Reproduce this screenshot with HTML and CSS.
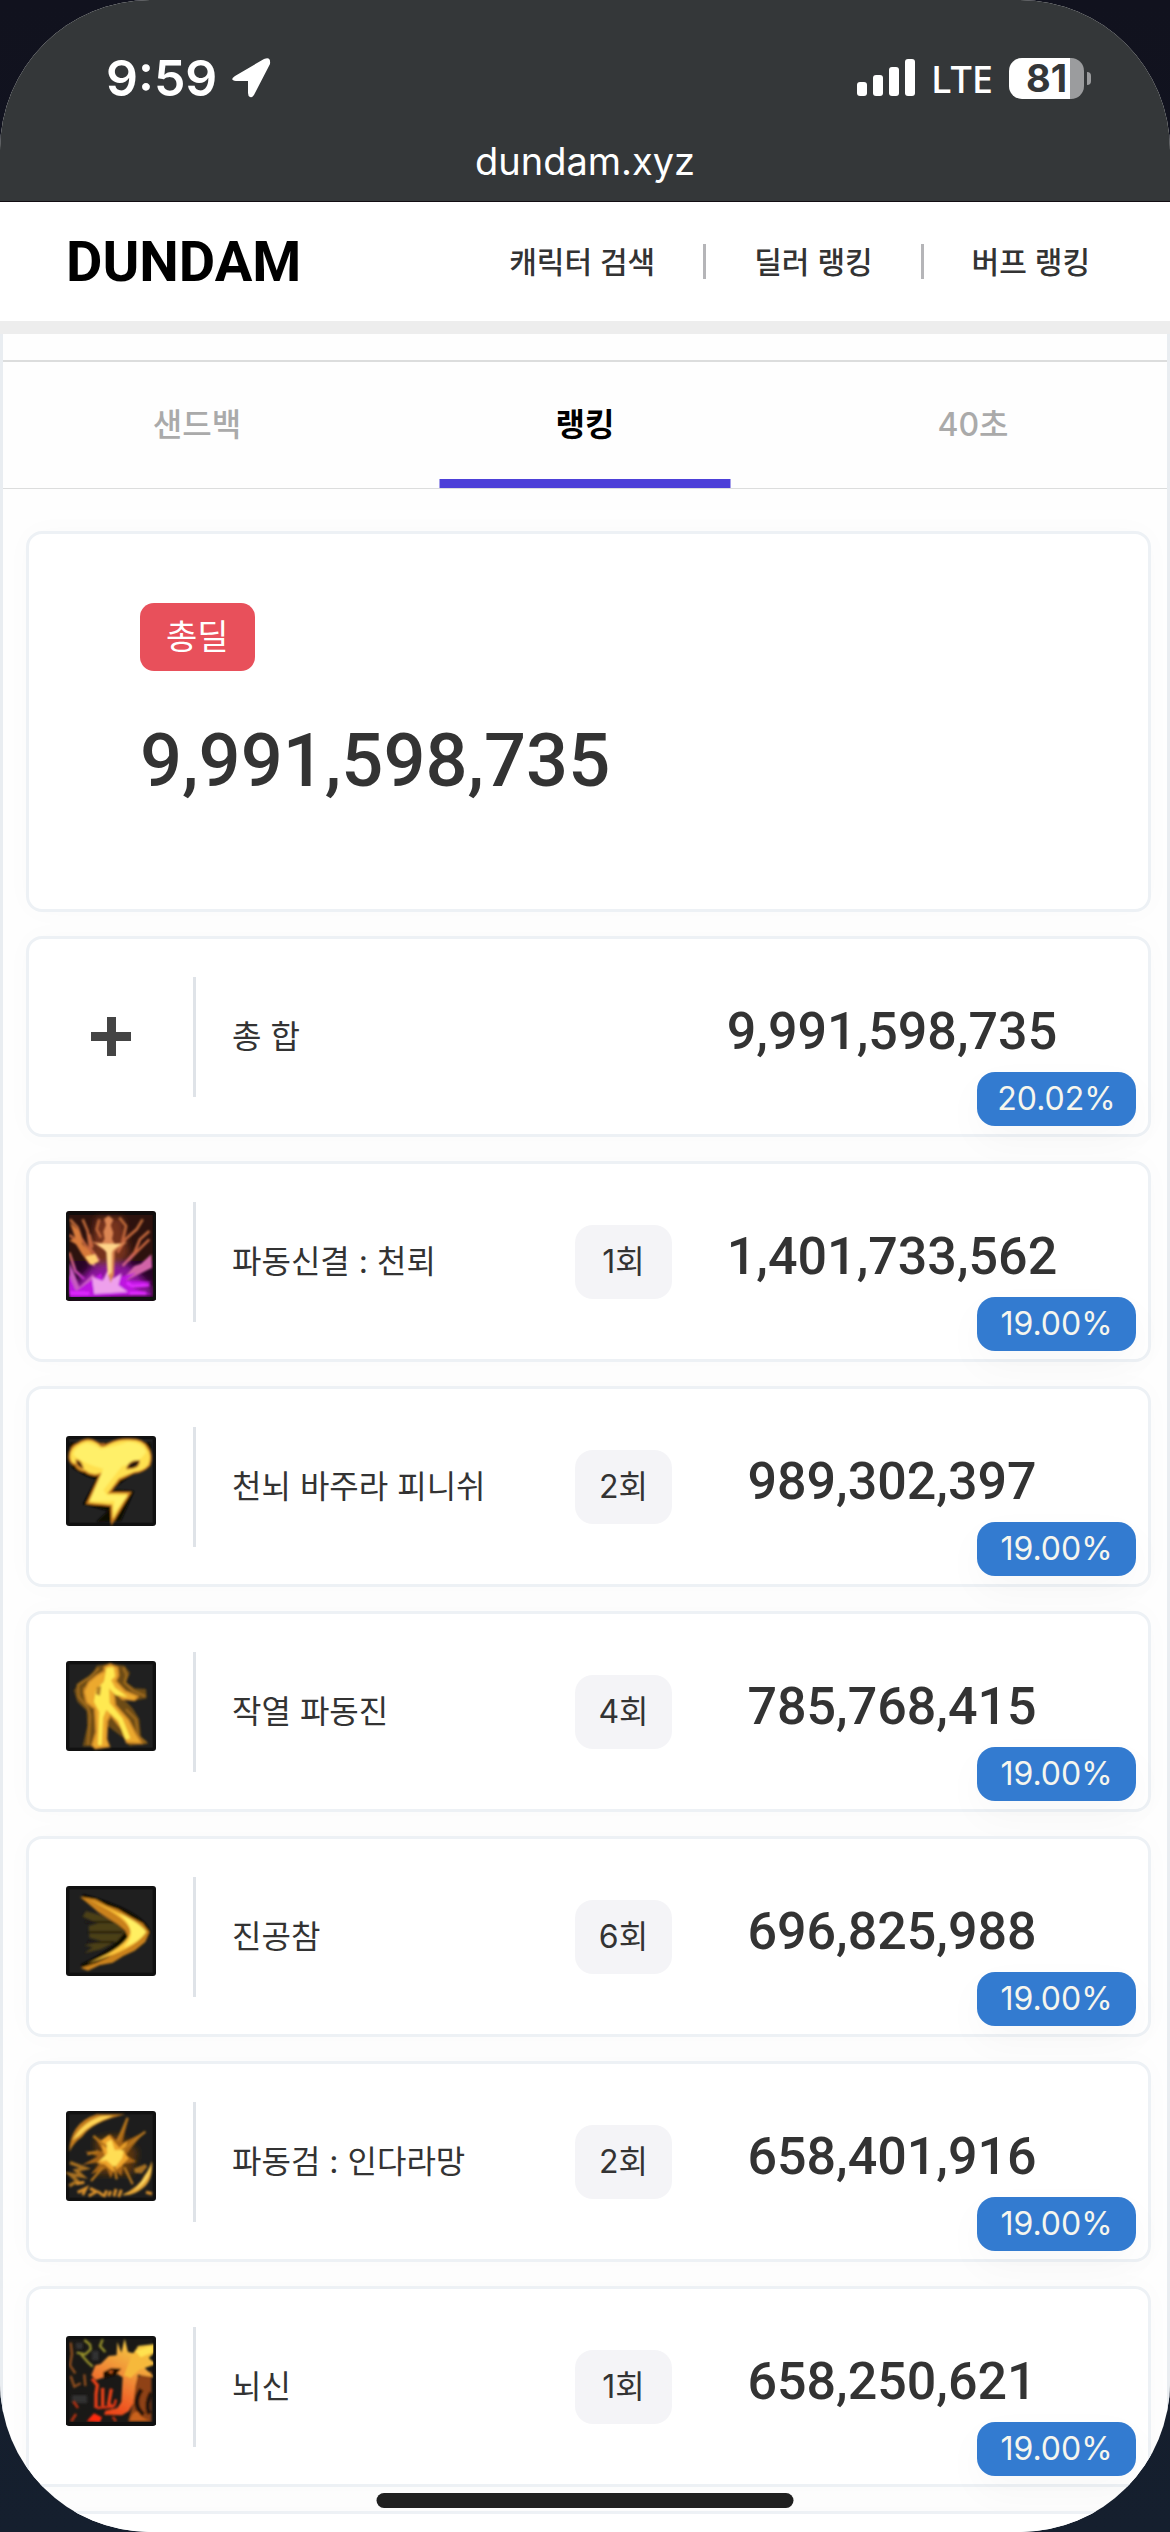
FILE: index.html
```html
<!DOCTYPE html>
<html lang="ko">
<head>
  <meta charset="UTF-8">
  <meta name="viewport" content="width=device-width, initial-scale=1.0">
  <title>DUNDAM</title>
  <link rel="stylesheet" href="styles.css">
</head>
<body>
  <div class="screen">
    <!-- Phone status bar -->
    <div class="status-bar">
      <div class="status-row">
        <div class="status-left">
          <span class="time">9:59</span>
          <svg class="location" viewBox="0 0 40 40" aria-hidden="true">
            <path d="M4 18 33 1Q40-2 39 6L24 35Q22 40 19 39 17 38 17 35V23H5Q-2 22 4 18Z" fill="#fff"/>
          </svg>
        </div>
        <div class="status-right">
          <svg class="signal" viewBox="0 0 58 38" aria-hidden="true">
            <g fill="#fff">
              <rect x="0" y="23" width="10" height="14" rx="3"/>
              <rect x="16" y="16" width="10" height="21" rx="3"/>
              <rect x="32" y="8" width="10" height="29" rx="3"/>
              <rect x="48" y="0" width="10" height="37" rx="3"/>
            </g>
          </svg>
          <span class="network">LTE</span>
          <span class="battery">81</span>
        </div>
      </div>
      <div class="address">dundam.xyz</div>
    </div>

    <!-- Site header -->
    <header class="site-header">
      <a href="#" class="logo">DUNDAM</a>
      <nav class="menu">
        <a href="#">캐릭터 검색</a>
        <a href="#">딜러 랭킹</a>
        <a href="#">버프 랭킹</a>
      </nav>
    </header>

    <main class="content">
      <div class="tabs">
        <button type="button" class="tab">샌드백</button>
        <button type="button" class="tab active">랭킹</button>
        <button type="button" class="tab">40초</button>
      </div>

      <section class="total-card">
        <span class="total-label">총딜</span>
        <strong class="total-value">9,991,598,735</strong>
      </section>

      <!-- Damage per skill -->
      <ul class="skill-list">
        <li class="skill">
          <div class="skill-icon">
            <svg class="plus" viewBox="0 0 40 40" aria-hidden="true"><path d="M16 0h9v15h15v9H25v15h-9V24H0v-9h16z" fill="#444"/></svg>
          </div>
          <span class="skill-name">총 합</span>
          <span></span>
          <span class="skill-value">9,991,598,735</span>
          <span class="rate">20.02%</span>
        </li>
        <li class="skill">
          <div class="skill-icon">
            <svg class="picture" viewBox="0 0 270 270" aria-hidden="true">
              <defs>
                <filter id="soft"><feGaussianBlur stdDeviation="3"/></filter>
                <filter id="glow"><feGaussianBlur stdDeviation="11"/></filter>
                <linearGradient id="ray" x1="0" y1="0" x2="0" y2="270" gradientUnits="userSpaceOnUse">
                  <stop offset="0" stop-color="#b86a35"/>
                  <stop offset=".45" stop-color="#c5633f"/>
                  <stop offset=".62" stop-color="#d2609a"/>
                  <stop offset=".8" stop-color="#b51ddb"/>
                  <stop offset="1" stop-color="#b40ce0"/>
                </linearGradient>
              </defs>
              <rect width="270" height="270" rx="9" fill="#110c0c"/>
              <rect x="10" y="12" width="250" height="246" fill="#2d120e"/>
              <rect x="10" y="150" width="250" height="108" fill="#280426"/>
              <g filter="url(#glow)">
                <path d="M90 20h80l20 110-50 60-70-40z" fill="#74301f"/>
                <path d="M12 235 80 165l110-5 68 70v25H12z" fill="#8b129c"/>
              </g>
              <g filter="url(#soft)">
                <g fill="none" stroke="url(#ray)" stroke-width="8">
                  <path d="M12 25 35 50 45 80 70 120 85 165M10 72 35 90 60 130M50 25 65 60 72 110 100 150M70 70 80 110M100 25 92 55 105 80M160 20 180 45 168 95M230 25 212 55 178 85 155 125M250 60 222 85 205 125 170 165M250 85 225 110 185 150M10 125 28 180 55 205"/>
                </g>
                <path d="M12 35 40 60 50 100 85 135 94 155 70 160 48 130 30 100 10 88 28 82z" fill="#d87a3a"/>
                <path d="M58 137 88 130 98 152 75 162z" fill="#ffce70"/>
                <path d="M256 130 225 158 205 165 170 205 148 225 258 170z" fill="#d163a7"/>
                <path d="M10 155 28 195 40 228 80 190 105 215 60 245 12 250z" fill="#c85bc0"/>
                <path d="M8 190 30 240 80 205 105 185 115 220 150 200 210 185 180 208 258 212 195 230 260 250 12 260 8 235z" fill="#bd12df"/>
                <path d="M250 222 200 226 182 215M12 246 70 247M240 247H190" stroke="#e02cff" stroke-width="9" fill="none"/>
                <path d="m78 198 32 12 14-30 8 28 35-22-10 36 28 21-100 6z" fill="#eea0ec"/>
                <path d="m78 92 30 4 8-12-4-22 8-20-6-18 14-10 14 12-8 17 8 22-4 20 8 13 38-4-28 18-10 10-2 70-10 24-8-25-2-68z" fill="#db8552"/>
                <path d="m92 98 73 1-22 16-6 9v60l-12 10-4-70-8-10z" fill="#ffd58a"/>
              </g>
              <path d="M4 8V262H266V8" fill="none" stroke="#111" stroke-width="8"/>
            </svg>
          </div>
          <span class="skill-name">파동신결 : 천뢰</span>
          <span class="count">1회</span>
          <span class="skill-value">1,401,733,562</span>
          <span class="rate">19.00%</span>
        </li>
        <li class="skill">
          <div class="skill-icon">
            <svg class="picture" viewBox="0 0 270 270" aria-hidden="true">
              <rect width="270" height="270" rx="9" fill="#111"/>
              <rect x="10" y="10" width="250" height="250" fill="#222"/>
              <g filter="url(#soft)">
                <path d="M18 95 60 120 90 130 50 205 125 225 90 258 165 255 205 165 140 160 200 115 255 90V20H10z" fill="#0b0803"/>
                <path d="M10 62Q10 34 36 22 66 2 90 18 110 34 130 22 160 8 186 10 232 8 245 36 262 58 250 88 232 108 205 110L160 130 130 170H192L162 220 138 260 136 208 64 202 104 114Q76 122 58 106 36 104 28 86 10 82 10 62Z" fill="#ffe04f" stroke="#c97a1e" stroke-width="6"/>
                <path d="M22 56Q30 30 62 22 84 24 104 40 140 34 186 18 228 18 240 48 224 78 168 90L112 162 122 178 184 180 142 232 146 194 72 194 112 98Q58 86 22 56Z" fill="#fff069"/>
                <path d="M30 72q16 0 22 26-22-4-22-26zM182 98q6-26 38-24 0 26-38 24z" fill="#20150a" stroke="#ba7527" stroke-width="4"/>
                <path d="M98 28q12 10 26 0l-12-8z" fill="#b56a20"/>
              </g>
            </svg>
          </div>
          <span class="skill-name">천뇌 바주라 피니쉬</span>
          <span class="count">2회</span>
          <span class="skill-value">989,302,397</span>
          <span class="rate">19.00%</span>
        </li>
        <li class="skill">
          <div class="skill-icon">
            <svg class="picture" viewBox="0 0 270 270" aria-hidden="true">
              <rect width="270" height="270" rx="9" fill="#111"/>
              <rect x="10" y="10" width="250" height="250" fill="#202020"/>
              <g filter="url(#soft)">
                <path d="M92 14 130 8 176 14 192 36 180 64 206 82 240 84 242 112 212 118 172 114 200 142 220 175 225 228 248 248 190 254 172 230 126 196 118 256H50L64 195 62 150 34 122 24 88 42 62 80 38z" fill="#6d4c16"/>
                <path d="M98 22 72 48 36 72 38 108 66 140 72 165 66 252M172 20 182 42 176 65 202 90 238 106M180 145 210 175 216 225 240 245M54 78 58 115 80 140" fill="none" stroke="#9a681b" stroke-width="8"/>
                <path d="m115 18 18-9 22 11 3 24-8 16 28 30 38 16-10 12-38-4-24-22 4 40 40 45 22 42 18 28-46-2-14-40-34-42-10 18-2 54 8 22-42 6-10-10 12-40-4-70-24-18-8-34 14-28 24-20 22-12z" fill="#eca92f" stroke="#c88325" stroke-width="5"/>
                <path d="m122 20 20-2 5 28-12 12 12 22 38 28-36-6-20-20 2 44 38 46 24 60-14 4-22-56-36-34-10 24-4 82H96l4-100-16-30 6-36 24-24z" fill="#ffe951"/>
                <path d="m92 78 14-2-4 28-12-4z" fill="#b48125"/>
              </g>
            </svg>
          </div>
          <span class="skill-name">작열 파동진</span>
          <span class="count">4회</span>
          <span class="skill-value">785,768,415</span>
          <span class="rate">19.00%</span>
        </li>
        <li class="skill">
          <div class="skill-icon">
            <svg class="picture" viewBox="0 0 270 270" aria-hidden="true">
              <rect width="270" height="270" rx="9" fill="#111"/>
              <rect x="10" y="10" width="250" height="250" fill="#1f1f1f"/>
              <g filter="url(#soft)">
                <path d="M50 32Q225 80 245 138 222 200 48 242 170 184 178 136 165 95 50 32Z" fill="#0c0904" stroke="#0c0904" stroke-width="16"/>
                <path d="M60 75 105 88 154 114 178 137 154 165 105 190 55 202 80 184 55 178 108 166 70 155 68 120 95 112 50 92z" fill="#4c3f18"/>
                <path d="M65 139H170M58 108H150M65 168H145" stroke="#17130a" stroke-width="5"/>
                <path d="m42 32 48 8 32 18 34 12 38 22 36 20 20 26-12 30-32 26-34 16-32 20-40 8-34 16-22-8 48-16 34-16 26-20 24-18 10-22-8-20-24-20-30-18-28-18z" fill="#c9811d"/>
                <path d="M62 37 125 65Q205 100 240 138 218 175 145 204L62 234 125 203Q184 170 194 137 188 106 125 70Z" fill="#ffc63b"/>
                <path d="M158 82Q224 112 240 138 222 166 172 185 200 156 194 136 192 110 158 82Z" fill="#ffef62"/>
              </g>
            </svg>
          </div>
          <span class="skill-name">진공참</span>
          <span class="count">6회</span>
          <span class="skill-value">696,825,988</span>
          <span class="rate">19.00%</span>
        </li>
        <li class="skill">
          <div class="skill-icon">
            <svg class="picture" viewBox="0 0 270 270" aria-hidden="true">
              <rect width="270" height="270" rx="9" fill="#111"/>
              <rect x="10" y="10" width="250" height="250" fill="#1d1d1d"/>
              <g filter="url(#glow)"><path d="M85 85 160 70 215 120 200 190 95 190z" fill="#5a350b"/></g>
              <g filter="url(#soft)">
                <path d="M10 122Q12 36 92 10H178Q80 32 48 78 26 92 10 122Z" fill="#c37b1e"/>
                <path d="M20 88Q48 35 105 16L142 14Q70 40 42 72Z" fill="#ffd554"/>
                <path d="M258 150Q262 208 230 232 202 256 168 252 220 228 236 192 248 178 258 150Z" fill="#e2a334"/>
                <path d="M254 165Q252 210 202 240 240 206 254 165Z" fill="#ffe46b"/>
                <path d="m88 82 30 10 14-24 18 20 38-68-20 76 68-34-40 48-16 22 32 20-40 8-6 36-20-22-12 28-12-30-48 18 32-38-58 10 48-26-40-14 54-2z" fill="#a56417"/>
                <path d="m104 90 24-18 20 24 12 14 24-20-10 32 14 20-22 22-24 18-26-22-24-4 26-20-8-20z" fill="#eea32b"/>
                <path d="m122 94 14-8 10 32 28-2-6 26-22 28-24-22-22 2 24-22z" fill="#ffdd55"/>
                <path d="M168 118 238 62M122 108 82 75M145 165 152 205M175 168 200 220M110 170 75 210M98 120 64 130M155 90 185 20" fill="none" stroke="#b7771e" stroke-width="7"/>
                <path d="M12 155 58 172 30 178 50 196 12 190 34 210 10 225M205 178 240 164 225 182 206 180" fill="none" stroke="#a66f20" stroke-width="10"/>
                <path d="M30 218 55 214M35 244 60 232 50 252M72 232 92 242 68 255M96 242 112 254M122 238 114 258M134 240 128 256M150 234 144 256M166 236 158 258M240 244 258 248" fill="none" stroke="#d38c2a" stroke-width="9"/>
              </g>
            </svg>
          </div>
          <span class="skill-name">파동검 : 인다라망</span>
          <span class="count">2회</span>
          <span class="skill-value">658,401,916</span>
          <span class="rate">19.00%</span>
        </li>
        <li class="skill">
          <div class="skill-icon">
            <svg class="picture" viewBox="0 0 270 270" aria-hidden="true">
              <defs>
                <linearGradient id="fire" x1="220" y1="30" x2="100" y2="260" gradientUnits="userSpaceOnUse">
                  <stop offset="0" stop-color="#f5ca42"/>
                  <stop offset=".4" stop-color="#f08b36"/>
                  <stop offset=".7" stop-color="#ef5a24"/>
                  <stop offset="1" stop-color="#e52b0c"/>
                </linearGradient>
              </defs>
              <rect width="270" height="270" rx="9" fill="#111"/>
              <rect x="10" y="10" width="250" height="250" fill="#1a1917"/>
              <path d="M18 178h45v24H18zM30 20h20v18H30zM78 45h20v28H78z" fill="#303030" filter="url(#soft)"/>
              <g filter="url(#soft)">
                <!-- body and wing -->
                <path d="m196 130 60-24v150h-70l14-50z" fill="#8f4212"/>
                <path d="M226 160q-30 45 6 76M256 170q-18 34-6 64" fill="none" stroke="#241208" stroke-width="14"/>
                <path d="M190 256q10-34 26-28 16 24 42 28z" fill="#c9621d"/>
                <!-- sparks round the head -->
                <path d="m14 20 4 34-6 34 16 24M14 120 25 152 44 142M55 115 58 150" fill="none" stroke="#93501f" stroke-width="7"/>
                <path d="M55 12 72 26 74 40 58 55 32 50M110 10 102 30 118 48M45 55 65 78 80 92" fill="none" stroke="#99932c" stroke-width="7"/>
                <!-- head, mane and jaw -->
                <path d="m104 84 24-24 24-2 2-40 12 32 10-42 10 40 18 4 12-22 52-6v24l-20 18 22 18-34 12 30 28-50-8-8 34-6 52-14 24-20 12-54-2 4-12 36-8 12-18 4-74-22-14-28 12-30 10-14-14 12-30z" fill="url(#fire)"/>
                <path d="m196 62 12-20 50-12v22l-22 20 22 16-36 12-28 26-20-8z" fill="#f6b93b"/>
                <path d="M208 44 258 30v20l-34 14z" fill="#ffe24f"/>
                <path d="m112 108 24-12 30 2-16 18-38 12z" fill="#1b0b05"/>
                <path d="m126 106 16-4-6 12z" fill="#cf5a1d"/>
                <path d="m78 128 16 20-4 26v42M110 156v54M136 158l-8 46 14 10" fill="none" stroke="#e84019" stroke-width="10"/>
                <path d="M92 216l46-4M150 190l-6 22" stroke="#d83415" stroke-width="8"/>
                <path d="M62 256 84 232l24 12-6 14z" fill="#ff2b0c"/>
                <path d="M16 256 30 234M150 256l-10-14M22 196l14 20" stroke="#b03113" stroke-width="8"/>
              </g>
              <path d="M4 8V262H266V8" fill="none" stroke="#111" stroke-width="8"/>
            </svg>
          </div>
          <span class="skill-name">뇌신</span>
          <span class="count">1회</span>
          <span class="skill-value">658,250,621</span>
          <span class="rate">19.00%</span>
        </li>
        <li class="skill"></li>
      </ul>
    </main>
    <div class="home-indicator"></div>
  </div>
</body>
</html>
```
FILE: styles.css
```css
* {
  box-sizing: border-box;
}

body {
  margin: 0;
  background: linear-gradient(#11121e, #151f2e);
  font-family: Inter, "Noto Sans CJK KR", sans-serif;
  font-size: 32px;
  line-height: 48px;
  color: #333;
}

a {
  color: inherit;
  text-decoration: none;
}

.screen {
  position: relative;
  height: 100vh;
  overflow: hidden;
  background: #fefefe;
  border-radius: 150px;
}

/* status bar */
.status-bar {
  height: 202px;
  padding-top: 48px;
  background: #343739;
  border-bottom: 1px solid #120d12;
  color: #fff;
}

.status-row {
  display: flex;
  justify-content: space-between;
  align-items: center;
  height: 60px;
  padding: 0 79px 0 106px;
}

.status-left,
.status-right {
  display: flex;
  align-items: center;
}

.status-left {
  gap: 14px;
}

.status-right {
  gap: 16px;
}

.time {
  font-size: 50px;
  font-weight: 600;
}

.location {
  width: 40px;
  height: 40px;
}

.signal {
  width: 58px;
  height: 38px;
}

.network {
  font-family: "Noto Sans", sans-serif;
  font-size: 38px;
  font-weight: 500;
}

.battery {
  position: relative;
  width: 75px;
  height: 41px;
  margin-right: 7px;
  background: linear-gradient(to right, #fff 81%, #9b9c9e 81%);
  border-radius: 13px;
  color: #343739;
  font-size: 38px;
  font-weight: 700;
  line-height: 41px;
  text-align: center;
}

.battery::after {
  content: "";
  position: absolute;
  top: 14px;
  right: -7px;
  width: 4px;
  height: 13px;
  background: #9b9c9e;
  border-radius: 0 4px 4px 0;
}

.address {
  margin-top: 29px;
  font-size: 38px;
  text-align: center;
}

/* site header */
.site-header {
  display: flex;
  justify-content: space-between;
  align-items: center;
  height: 132px;
  padding: 0 80px 0 66px;
  background: #fff;
  border-bottom: 13px solid #ededed;
}

.logo {
  color: #000;
  font-family: Roboto, sans-serif;
  font-size: 56px;
  font-weight: 700;
}

.menu {
  display: flex;
  align-items: center;
  font-size: 30px;
  font-weight: 500;
}

.menu a + a {
  display: flex;
  align-items: center;
}

.menu a + a::before {
  content: "";
  width: 3px;
  height: 35px;
  margin: 0 48px;
  background: #b5b5b8;
}

/* content */
.content {
  padding-top: 26px;
  border: solid #e9edf1;
  border-width: 0 3px;
}

.tabs {
  display: flex;
  height: 129px;
  border-top: 2px solid #dcdddd;
  border-bottom: 1px solid #dcdddd;
}

.tab {
  position: relative;
  flex: 1;
  padding: 0;
  background: none;
  border: none;
  color: #aaa;
  font: inherit;
  font-weight: 500;
  cursor: pointer;
}

.tab.active {
  color: #000;
  font-weight: 700;
}

.tab.active::after {
  content: "";
  position: absolute;
  bottom: 0;
  left: 50%;
  width: 75%;
  height: 9px;
  background: #4d40d8;
  transform: translateX(-50%);
}

.total-card,
.skill {
  background: #fff;
  border: 3px solid #edf1f5;
  border-radius: 16px;
  box-shadow: 0 0 30px rgba(0, 0, 0, 0.02);
}

.total-card {
  display: flex;
  flex-direction: column;
  align-items: flex-start;
  gap: 42px;
  height: 381px;
  margin: 42px 16px 24px 23px;
  padding: 69px 111px;
}

.total-label {
  padding: 10px 26px;
  background: #e8505b;
  border-radius: 14px;
  color: #fff;
  font-size: 34px;
}

.total-value {
  font-family: Roboto, sans-serif;
  font-size: 74px;
  font-weight: 500;
  line-height: 96px;
}

.skill-list {
  display: flex;
  flex-direction: column;
  gap: 24px;
  margin: 0 16px 0 23px;
  padding: 0;
  list-style: none;
}

.skill {
  position: relative;
  display: grid;
  grid-template-columns: 167px 1fr 97px 440px;
  align-items: center;
  height: 201px;
  padding-right: 36px;
}

.skill-icon {
  display: flex;
  justify-content: center;
  align-items: center;
  height: 120px;
  border-right: 3px solid #dfe3e8;
}

.picture {
  width: 90px;
  height: 90px;
  margin-bottom: 12px;
}

.plus {
  width: 40px;
  height: 40px;
}

.skill-name {
  padding-left: 36px;
}

.count {
  padding: 13px 0;
  background: #f4f4f7;
  border-radius: 18px;
  text-align: center;
}

.skill-value {
  padding-bottom: 10px;
  font-family: Roboto, sans-serif;
  font-size: 52px;
  font-weight: 500;
  text-align: center;
}

.rate {
  position: absolute;
  right: 12px;
  bottom: 8px;
  width: 159px;
  background: #337bd0;
  border-radius: 18px;
  box-shadow: 0 15px 40px rgba(0, 0, 0, 0.03);
  color: #f6f6ee;
  line-height: 54px;
  text-align: center;
}

.home-indicator {
  position: absolute;
  bottom: 24px;
  left: 50%;
  width: 417px;
  height: 15px;
  background: #202020;
  border-radius: 8px;
  transform: translateX(-50%);
}
```
